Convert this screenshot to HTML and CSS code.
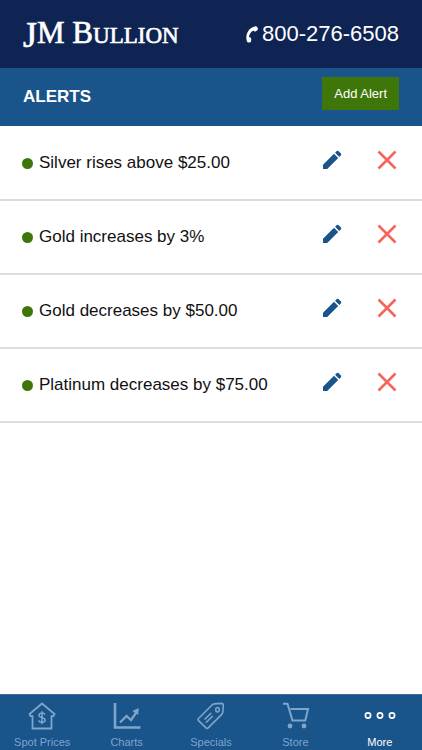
FILE: index.html
```html
<!DOCTYPE html>
<html lang="en">
<head>
<meta charset="utf-8">
<meta name="viewport" content="width=device-width, initial-scale=1">
<title>Alerts - JM Bullion</title>
<link rel="stylesheet" href="styles.css">
</head>
<body>
<svg class="sprite" aria-hidden="true">
  <symbol id="pencil" viewBox="0 0 20 20">
    <path d="M1 19v-4.200L12 3.800l4.200 4.200L5.200 19zM13.100 2.700l1.400-1.400c.7-.7 1.500-.7 2.200 0l2 2c.7.7.7 1.500 0 2.200l-1.400 1.400z"/>
  </symbol>
  <symbol id="cross" viewBox="0 0 20 20">
    <path d="M1.500 1.500l17 17M18.500 1.500l-17 17" fill="none" stroke="currentColor" stroke-width="2.600"/>
  </symbol>
</svg>
<header class="brand">
  <a class="logo" href="#"><span class="logo-drop">J</span>M B<span class="logo-small">ULLION</span></a>
  <a class="phone" href="tel:8002766508">
    <svg class="phone-icon" viewBox="0 0 12 17" aria-hidden="true"><path d="M9.500.2C4.800.8.400 5.500.300 11.500c0 1.700.300 3 .700 4 .600 1.500 3.500 1.300 4-.1.300-.9.300-2.600 0-3.400-.300-.8-1.200-.9-2-.8.100-2.900 2-5.700 4.500-6.700.3.800.9 1.200 1.700 1 .9-.2 2-1 2.500-1.700C12.400 2.500 11.200 0 9.500.2z"/></svg>
    <span>800-276-6508</span>
  </a>
</header>
<div class="titlebar">
  <h1 class="title">ALERTS</h1>
  <button class="add" type="button">Add Alert</button>
</div>
<main class="content">
  <ul class="alerts">
    <li class="alert">
      <span class="dot"></span><span class="label">Silver rises above $25.00</span>
      <button class="action edit" type="button" aria-label="Edit"><svg class="icon"><use href="#pencil"/></svg></button>
      <button class="action delete" type="button" aria-label="Delete"><svg class="icon"><use href="#cross"/></svg></button>
    </li>
    <li class="alert">
      <span class="dot"></span><span class="label">Gold increases by 3%</span>
      <button class="action edit" type="button" aria-label="Edit"><svg class="icon"><use href="#pencil"/></svg></button>
      <button class="action delete" type="button" aria-label="Delete"><svg class="icon"><use href="#cross"/></svg></button>
    </li>
    <li class="alert">
      <span class="dot"></span><span class="label">Gold decreases by $50.00</span>
      <button class="action edit" type="button" aria-label="Edit"><svg class="icon"><use href="#pencil"/></svg></button>
      <button class="action delete" type="button" aria-label="Delete"><svg class="icon"><use href="#cross"/></svg></button>
    </li>
    <li class="alert">
      <span class="dot"></span><span class="label">Platinum decreases by $75.00</span>
      <button class="action edit" type="button" aria-label="Edit"><svg class="icon"><use href="#pencil"/></svg></button>
      <button class="action delete" type="button" aria-label="Delete"><svg class="icon"><use href="#cross"/></svg></button>
    </li>
  </ul>
</main>
<nav class="tabs">
  <a class="tab" href="#">
    <svg class="tab-icon" viewBox="0 0 32 28"><path d="M16 1.500L3.500 12l1 2.200H6.500V26.500h19V14.200h2l1-2.200z" stroke-width="1.800"/><path d="M19 12.700c-.5-1.200-1.600-1.700-3-1.700-1.700 0-3 .8-3 2.200 0 3.300 6.200 1.500 6.200 4.900 0 1.500-1.400 2.300-3.200 2.300-1.700 0-3-.7-3.400-2M16 9.200v13" stroke-width="1.500"/></svg>
    <span>Spot Prices</span>
  </a>
  <a class="tab" href="#">
    <svg class="tab-icon" viewBox="0 0 32 28"><path d="M4 1v24.500h25.500" stroke-width="2.600"/><path d="M9 20.500l6.500-6.500 4.500 4 6-8.500" stroke-width="2.200"/><path d="M27.800 6l-.6 7-5.900-3.900z" fill="currentColor" stroke="none"/></svg>
    <span>Charts</span>
  </a>
  <a class="tab" href="#">
    <svg class="tab-icon" viewBox="0 0 32 28"><path d="M3.500 16.500L16.800 3.200c.8-.8 1.500-1.200 2.600-1.300l7-.5c1.200 0 1.900.7 1.900 1.900l-.5 6.700c-.1 1.100-.5 1.800-1.300 2.600L13.200 25.900c-.7.7-1.500.7-2.200 0l-7.500-7.300c-.7-.7-.7-1.400 0-2.100z" stroke-width="1.600"/><path d="M9.500 17.500l6.800-6.500M10.800 20.800l7-6.800M20.800 7c0-2 3.400-2 3.400 0v1.500c0 2-3.400 2-3.400 0z" stroke-width="1.600"/></svg>
    <span>Specials</span>
  </a>
  <a class="tab" href="#">
    <svg class="tab-icon" viewBox="0 0 32 28"><path d="M4 1.700h4.500l5 16.800h12.800L29 7H11.500" stroke-width="2"/><circle cx="11" cy="24" r="2.400" fill="currentColor" stroke="none"/><circle cx="25" cy="24" r="2.400" fill="currentColor" stroke="none"/></svg>
    <span>Store</span>
  </a>
  <a class="tab current" href="#" aria-current="page">
    <svg class="tab-icon" viewBox="0 0 32 28"><g stroke-width="1.700"><circle cx="4" cy="13.500" r="2.600"/><circle cx="16" cy="13.500" r="2.600"/><circle cx="28" cy="13.500" r="2.600"/></g></svg>
    <span>More</span>
  </a>
</nav>
</body>
</html>
```
FILE: styles.css
```css
* { box-sizing: border-box; }
body {
  margin: 0;
  min-height: 100vh;
  display: flex;
  flex-direction: column;
  background: #fff;
  color: #111;
  font-family: "Liberation Sans", Arial, sans-serif;
}
a { color: inherit; text-decoration: none; }
button { font: inherit; border: 0; padding: 0; cursor: pointer; }
.sprite { display: none; }

.brand {
  display: flex;
  align-items: center;
  justify-content: space-between;
  height: 68px;
  padding: 0 23px;
  background: #0f2453;
  color: #fff;
}
.logo {
  font-family: "Liberation Serif", "Times New Roman", serif;
  font-size: 31px;
  line-height: 36px;
  white-space: nowrap;
  -webkit-text-stroke: 1px currentColor;
  -webkit-text-stroke-width: thin;
}
.logo-drop { font-size: 36px; line-height: 24px; vertical-align: -4px; }
.logo-small { font-size: 23px; }
.phone { display: flex; align-items: center; gap: 4px; font-size: 22px; line-height: 26px; }
.phone-icon { width: 12px; height: 17px; fill: currentColor; }

.titlebar {
  display: flex;
  align-items: center;
  justify-content: space-between;
  height: 58px;
  padding: 0 23px;
  background: #19548b;
  color: #fff;
}
.title { margin: 0; font-size: 17px; line-height: 22px; }
.add {
  height: 33px;
  padding: 0 12px;
  margin-bottom: 8px;
  background: #3f7609;
  color: #fff;
  font-size: 13px;
}

.content { flex: 1; }
.alerts { list-style: none; margin: 0; padding: 1px 0 0; }
.alert {
  display: flex;
  align-items: center;
  height: 74px;
  padding: 0 25px 0 22px;
  border-bottom: 2px solid #dcdcdc;
}
.dot { width: 11px; height: 11px; margin-right: 6px; border-radius: 50%; background: #3f7609; }
.label { flex: 1; font-size: 17px; line-height: 22px; }
.action { display: flex; margin-bottom: 6px; background: none; }
.edit { margin-right: 35px; color: #19548b; }
.delete { color: #f6655a; }
.icon { width: 20px; height: 20px; fill: currentColor; }

.tabs {
  display: grid;
  grid-template-columns: repeat(5, 1fr);
  height: 56px;
  background: #19548b;
  border-top: 1px solid #41709d;
}
.tab {
  display: flex;
  flex-direction: column;
  align-items: center;
  gap: 5px;
  padding-top: 7px;
  color: #7fa5cb;
  font-size: 11px;
  line-height: 14px;
}
.current { color: #fff; }
.tab-icon { width: 32px; height: 28px; fill: none; stroke: currentColor; }
```
